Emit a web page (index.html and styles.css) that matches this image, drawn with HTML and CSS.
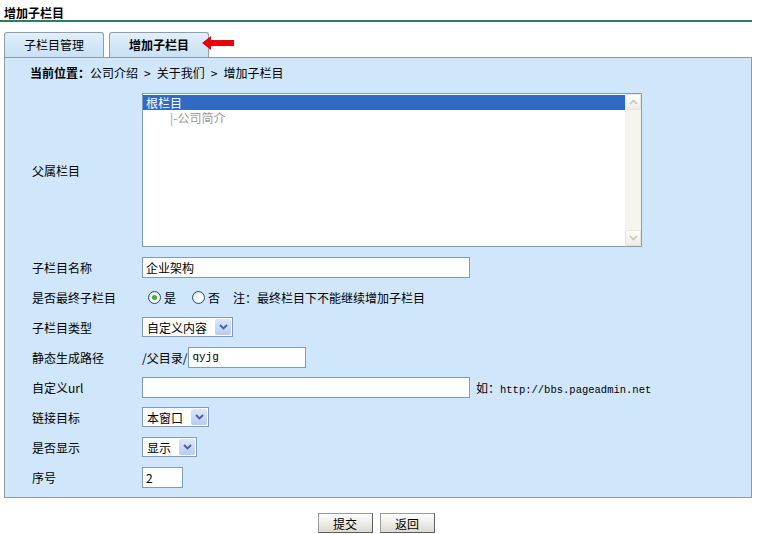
FILE: index.html
```html
<!DOCTYPE html>
<html>
<head>
    <title>增加子栏目</title>
    <link rel="stylesheet" href="styles.css">
</head>
<body>
    <div class="page-title">增加子栏目</div>

    <div class="tabs">
        <span class="tab">子栏目管理</span>
        <span class="tab tab-active">增加子栏目</span>
        <svg class="tab-arrow" width="32" height="14" viewBox="0 0 32 14">
            <polygon points="0,7 9,0 9,4 32,4 32,10 9,10 9,14" fill="#e8000b"/>
        </svg>
    </div>

    <div class="panel">
        <div class="crumb"><b>当前位置：</b>公司介绍<span class="sep">&gt;</span>关于我们<span class="sep">&gt;</span>增加子栏目</div>

        <div class="form">
            <div class="row row-list">
                <span class="label">父属栏目</span>
                <div class="listbox">
                    <div class="list-items">
                        <div class="opt opt-selected">根栏目</div>
                        <div class="opt opt-child">|-公司简介</div>
                    </div>
                    <div class="scrollbar">
                        <span class="sb-btn">
                            <svg width="9" height="6" viewBox="0 0 9 6"><polyline points="1,5 4.5,1.5 8,5" fill="none" stroke="#c9c7ba" stroke-width="1.6"/></svg>
                        </span>
                        <span class="sb-track"></span>
                        <span class="sb-btn">
                            <svg width="9" height="6" viewBox="0 0 9 6"><polyline points="1,1 4.5,4.5 8,1" fill="none" stroke="#c9c7ba" stroke-width="1.6"/></svg>
                        </span>
                    </div>
                </div>
            </div>

            <div class="row">
                <span class="label">子栏目名称</span>
                <input class="text wide" type="text" value="企业架构">
            </div>

            <div class="row">
                <span class="label">是否最终子栏目</span>
                <span class="radio radio-on"></span><span class="radio-text">是</span>
                <span class="radio"></span><span class="radio-text">否</span>
                <span class="note">注：最终栏目下不能继续增加子栏目</span>
            </div>

            <div class="row">
                <span class="label">子栏目类型</span>
                <div class="select">
                    <span class="select-text">自定义内容</span>
                    <span class="select-btn">
                        <svg width="9" height="6" viewBox="0 0 9 6"><polyline points="1,1 4.5,4.5 8,1" fill="none" stroke="#4d6185" stroke-width="1.8"/></svg>
                    </span>
                </div>
            </div>

            <div class="row">
                <span class="label">静态生成路径</span>
                <span class="prefix">/父目录/</span>
                <input class="text mono path" type="text" value="qyjg">
            </div>

            <div class="row">
                <span class="label">自定义url</span>
                <input class="text wide" type="text" value="">
                <span class="hint">如：<span class="mono-text">http://bbs.pageadmin.net</span></span>
            </div>

            <div class="row">
                <span class="label">链接目标</span>
                <div class="select">
                    <span class="select-text">本窗口</span>
                    <span class="select-btn">
                        <svg width="9" height="6" viewBox="0 0 9 6"><polyline points="1,1 4.5,4.5 8,1" fill="none" stroke="#4d6185" stroke-width="1.8"/></svg>
                    </span>
                </div>
            </div>

            <div class="row">
                <span class="label">是否显示</span>
                <div class="select">
                    <span class="select-text">显示</span>
                    <span class="select-btn">
                        <svg width="9" height="6" viewBox="0 0 9 6"><polyline points="1,1 4.5,4.5 8,1" fill="none" stroke="#4d6185" stroke-width="1.8"/></svg>
                    </span>
                </div>
            </div>

            <div class="row">
                <span class="label">序号</span>
                <input class="text short" type="text" value="2">
            </div>
        </div>
    </div>

    <div class="actions">
        <button class="btn">提交</button>
        <button class="btn">返回</button>
    </div>
</body>
</html>
```

FILE: styles.css
```css
body {
    margin: 0;
    font-family: "Noto Sans CJK SC", "Liberation Sans", sans-serif;
    font-size: 12px;
    color: #000;
    background-color: #fff;
}

.page-title {
    width: 748px;
    padding: 5px 0 0 4px;
    height: 15px;
    line-height: 15px;
    font-weight: bold;
    border-bottom: 2px solid #2f7d5f;
}

/* tabs above the panel */
.tabs {
    display: flex;
    align-items: flex-end;
    margin: 10px 0 0 4px;
    height: 25px;
}

.tab {
    width: 98px;
    height: 24px;
    line-height: 24px;
    text-align: center;
    border: 1px solid #8e9eac;
    border-bottom: none;
    border-radius: 3px 3px 0 0;
    background: linear-gradient(#e2effb, #c8e0f6);
    margin-right: 5px;
}

.tab-active {
    font-weight: bold;
    width: 98px;
}

.tab-arrow {
    margin: 0 0 4px -12px;
    align-self: center;
}

.panel {
    margin-left: 4px;
    width: 748px;
    height: 441px;
    box-sizing: border-box;
    border: 1px solid #8e9aa6;
    background-color: #cfe6fb;
}

.crumb {
    height: 30px;
    line-height: 30px;
    padding-left: 25px;
}

.sep {
    margin: 0 6px;
}

.form {
    padding-left: 27px;
}

.row {
    display: flex;
    align-items: center;
    height: 30px;
}

.row-list {
    height: 164px;
}

.label {
    width: 110px;
    flex-shrink: 0;
}

/* list box */
.listbox {
    display: flex;
    width: 500px;
    height: 154px;
    box-sizing: border-box;
    border: 1px solid #7f9db9;
    background-color: #fff;
}

.list-items {
    flex: 1;
    padding-top: 1px;
}

.opt {
    height: 15px;
    line-height: 15px;
    padding-left: 3px;
    font-size: 12px;
}

.opt-selected {
    background-color: #316ac5;
    color: #fff;
}

.opt-child {
    color: #9a9a9a;
    padding-left: 27px;
}

.scrollbar {
    display: flex;
    flex-direction: column;
    width: 16px;
    background-color: #f5f4ee;
}

.sb-btn {
    display: flex;
    align-items: center;
    justify-content: center;
    height: 16px;
    box-sizing: border-box;
    border: 1px solid #e8e6dc;
    border-radius: 2px;
    background: linear-gradient(#fdfdfb, #eeede5);
}

.sb-track {
    flex: 1;
}

/* text inputs */
.text {
    height: 21px;
    box-sizing: border-box;
    border: 1px solid #7f9db9;
    padding: 0 3px;
    font-family: "Noto Sans CJK SC", "Liberation Sans", sans-serif;
    font-size: 12px;
    margin: 0;
    background-color: #fff;
}

.wide {
    width: 328px;
}

.path {
    width: 118px;
}

.short {
    width: 41px;
}

.mono {
    font-family: "Liberation Mono", "DejaVu Sans Mono", monospace;
    font-size: 11px;
}

.prefix {
    margin-right: 1px;
}

.hint {
    margin-left: 6px;
}

.mono-text {
    font-family: "Liberation Mono", "DejaVu Sans Mono", monospace;
    font-size: 10.5px;
}

/* radio buttons */
.radio {
    width: 11px;
    height: 11px;
    border: 1px solid #1c5180;
    border-radius: 50%;
    background: radial-gradient(circle at 60% 60%, #fff 30%, #d8d6cc);
    margin: 0 3px 0 6px;
    position: relative;
}

.radio-on::after {
    content: "";
    position: absolute;
    left: 3px;
    top: 3px;
    width: 5px;
    height: 5px;
    border-radius: 50%;
    background: #3fae2a;
}

.radio-text {
    margin-right: 10px;
}

.radio + .radio-text + .radio {
    margin-left: 6px;
}

.note {
    margin-left: 3px;
}

/* select boxes */
.select {
    display: flex;
    align-items: center;
    height: 20px;
    box-sizing: border-box;
    border: 1px solid #7f9db9;
    background-color: #fff;
    padding: 0 1px 0 4px;
}

.select-text {
    margin-right: 8px;
}

.select-btn {
    display: flex;
    align-items: center;
    justify-content: center;
    width: 16px;
    height: 16px;
    border-radius: 2px;
    background: linear-gradient(#dde7fd, #b8cbf7);
}

/* bottom buttons */
.actions {
    display: flex;
    justify-content: center;
    gap: 7px;
    margin-top: 15px;
    padding-right: 7px;
}

.btn {
    width: 55px;
    height: 20px;
    padding: 0;
    font-family: "Noto Sans CJK SC", "Liberation Sans", sans-serif;
    font-size: 12px;
    border: 1px solid #6f6f6f;
    border-color: #9a9a9a #5f5f5f #5f5f5f #9a9a9a;
    background: linear-gradient(#ffffff, #dcd9d2);
    cursor: pointer;
}
```
